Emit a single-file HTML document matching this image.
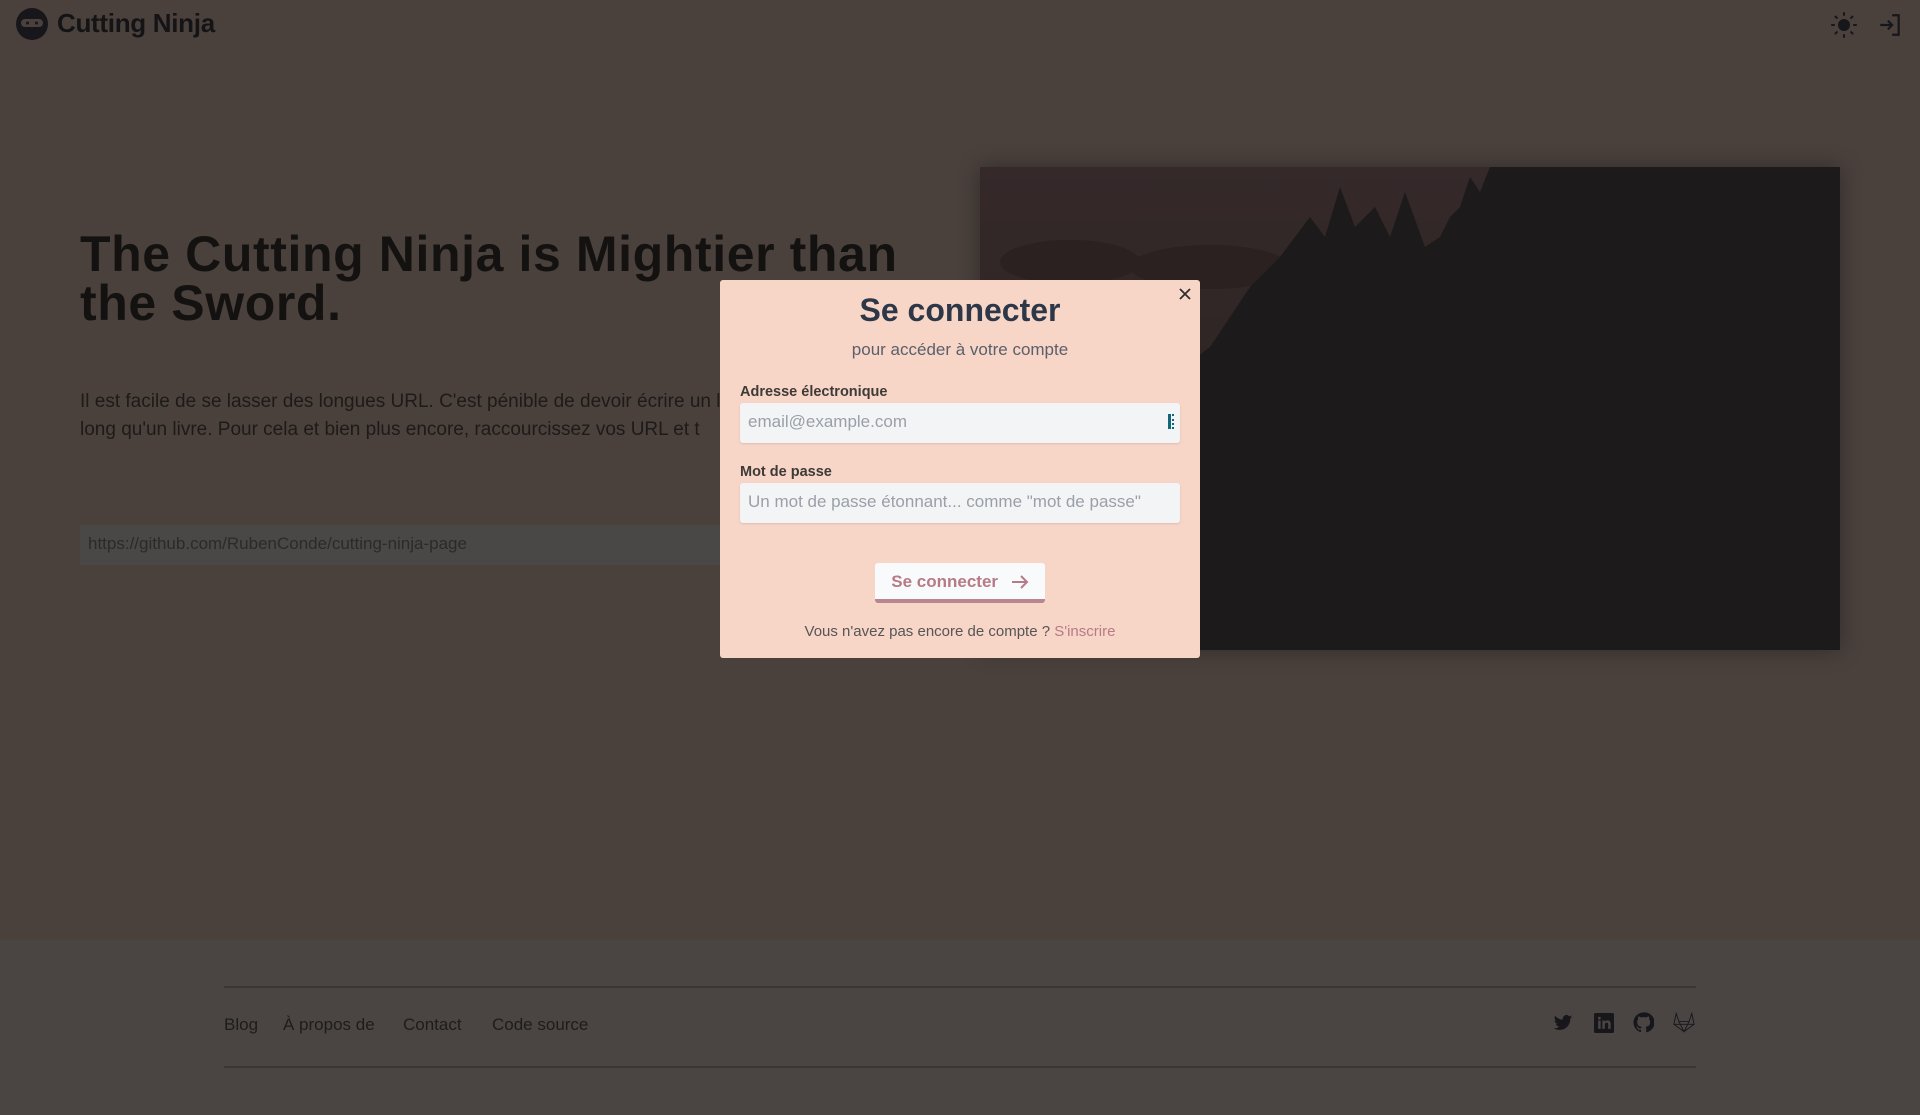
<!DOCTYPE html>
<html><head><meta charset="utf-8"><style>
*{margin:0;padding:0;box-sizing:border-box}
body{width:1920px;height:1115px;background:#4a413d;font-family:"Liberation Sans",sans-serif;position:relative;overflow:hidden}
.abs{position:absolute}
.logo-t{left:57px;top:8px;font-size:26px;font-weight:bold;color:#141316;letter-spacing:-0.3px}
h1{position:absolute;left:80px;top:230px;font-size:50px;line-height:49px;font-weight:bold;color:#141210;letter-spacing:0.6px}
.p{left:80px;top:388px;font-size:19px;line-height:28px;color:#1d1a18;width:800px;white-space:nowrap}
.url{left:80px;top:525px;width:860px;height:40px;background:#4a4847;color:#2b2a29;font-size:17px;padding:9px 8px}
.img{left:980px;top:167px;width:860px;height:483px;background:linear-gradient(180deg,#35292a 0%,#2f2624 40%,#241f1e 100%);box-shadow:0 0 20px rgba(0,0,0,.35);overflow:hidden}
.footer{left:0;top:940px;width:1920px;height:175px;background:#4a4543}
.line{left:224px;width:1472px;height:2px;background:#3a3634}
.fl{top:1015px;font-size:17px;color:#1e1c1b}
.modal{left:720px;top:280px;width:480px;height:378px;background:#f8d6c7;border-radius:3px}
.modal .t{position:absolute;left:0;width:480px;text-align:center}
label{position:absolute;left:20px;font-size:14.5px;font-weight:bold;color:#3d3a38}
.in{position:absolute;left:20px;width:440px;height:40px;background:#f3f4f6;border-radius:3px;box-shadow:0 1px 2px rgba(0,0,0,.12);font-size:17px;color:#9aa0a8;padding:9px 8px;white-space:nowrap;overflow:hidden}
.btn{position:absolute;left:155px;top:283px;width:170px;height:40px;background:#f8fafc;border-radius:3px;border-bottom:4px solid #b88590;color:#b77a86;font-weight:bold;font-size:17px;text-align:center;line-height:37px}
</style></head><body>
<svg class="abs" style="left:15px;top:7px" width="34" height="34" viewBox="0 0 34 34"><circle cx="17" cy="17" r="16" fill="#17161a"/><rect x="6" y="12" width="22" height="8" rx="4" fill="#4a413d"/><circle cx="12.5" cy="16" r="1.5" fill="#17161a"/><circle cx="21.5" cy="16" r="1.5" fill="#17161a"/></svg>
<div class="abs logo-t">Cutting Ninja</div>
<svg class="abs" style="left:1830px;top:11px" width="28" height="28" viewBox="0 0 28 28" fill="#17161a"><circle cx="14" cy="14" r="6"/><g stroke="#17161a" stroke-width="2" stroke-linecap="round"><path d="M14 2v2M14 24v2M2 14h2M24 14h2M5.5 5.5l1.4 1.4M21.1 21.1l1.4 1.4M5.5 22.5l1.4-1.4M21.1 6.9l1.4-1.4"/></g></svg>
<svg class="abs" style="left:1877px;top:12px" width="26" height="26" viewBox="0 0 24 24" fill="none" stroke="#17161a" stroke-width="2"><path d="M3 12h11M10 8l4 4-4 4M14 3h6v18h-6"/></svg>
<h1>The Cutting Ninja is Mightier than<br>the Sword.</h1>
<div class="abs p">Il est facile de se lasser des longues URL. C'est pénible de devoir écrire un lien aussi<br>long qu'un livre. Pour cela et bien plus encore, raccourcissez vos URL et t</div>
<div class="abs url">https://github.com/RubenConde/cutting-ninja-page</div>
<div class="abs img"><svg width="860" height="483" viewBox="0 0 860 483"><ellipse cx="90" cy="95" rx="70" ry="22" fill="#2a2120"/><ellipse cx="230" cy="100" rx="80" ry="22" fill="#2a2120"/><path d="M0 483V380L150 280 190 210 230 180 270 120 300 90 330 50 345 70 360 20 375 60 395 40 410 70 425 25 445 80 460 70 470 50 480 40 490 10 500 25 510 0H860V483Z" fill="#1c1a1a"/></svg></div>
<div class="abs footer"></div>
<div class="abs line" style="top:986px"></div>
<div class="abs line" style="top:1066px"></div>
<div class="abs fl" style="left:224px">Blog</div>
<div class="abs fl" style="left:283px">À propos de</div>
<div class="abs fl" style="left:403px">Contact</div>
<div class="abs fl" style="left:492px">Code source</div>
<svg class="abs" style="left:1553px;top:1013px" width="20" height="20" viewBox="0 0 24 24" fill="#17161a"><path d="M23 4.6a9 9 0 0 1-2.6.7 4.5 4.5 0 0 0 2-2.5 9 9 0 0 1-2.9 1.1A4.5 4.5 0 0 0 11.8 8 12.8 12.8 0 0 1 2.5 3.3a4.5 4.5 0 0 0 1.4 6 4.5 4.5 0 0 1-2-.6 4.5 4.5 0 0 0 3.6 4.5 4.5 4.5 0 0 1-2 .1 4.5 4.5 0 0 0 4.2 3.1A9 9 0 0 1 1 18.3 12.8 12.8 0 0 0 7.9 20.3c8.3 0 12.8-6.9 12.8-12.8v-.6A9 9 0 0 0 23 4.6z"/></svg>
<svg class="abs" style="left:1594px;top:1013px" width="20" height="20" viewBox="0 0 24 24"><rect width="24" height="24" rx="2" fill="#17161a"/><path d="M5 9h3v10H5zM6.5 4.5a1.7 1.7 0 1 1 0 3.4 1.7 1.7 0 0 1 0-3.4zM10 9h3v1.4c.5-.9 1.6-1.6 3.2-1.6 3 0 3.8 2 3.8 4.7V19h-3v-5c0-1.3-.2-2.5-1.7-2.5S13 12.6 13 14v5h-3z" fill="#4a4543"/></svg>
<svg class="abs" style="left:1633px;top:1012px" width="21" height="21" viewBox="0 0 24 24" fill="#17161a"><path d="M12 .5a11.5 11.5 0 0 0-3.6 22.4c.6.1.8-.3.8-.6v-2c-3.2.7-3.9-1.5-3.9-1.5-.5-1.3-1.3-1.7-1.3-1.7-1-.7.1-.7.1-.7 1.2.1 1.8 1.2 1.8 1.2 1 1.8 2.8 1.3 3.5 1 .1-.8.4-1.3.7-1.6-2.6-.3-5.3-1.3-5.3-5.7 0-1.3.5-2.3 1.2-3.1-.1-.3-.5-1.5.1-3.1 0 0 1-.3 3.2 1.2a11 11 0 0 1 5.8 0c2.2-1.5 3.2-1.2 3.2-1.2.6 1.6.2 2.8.1 3.1.8.8 1.2 1.9 1.2 3.1 0 4.4-2.7 5.4-5.3 5.7.4.4.8 1.1.8 2.2v3.3c0 .3.2.7.8.6A11.5 11.5 0 0 0 12 .5z"/></svg>
<svg class="abs" style="left:1673px;top:1012px" width="22" height="21" viewBox="0 0 24 22" fill="none" stroke="#17161a" stroke-width="1"><path d="M12 21 1 13l2.5-12 3 9h11l3-9L23 13zM6.5 10 12 21l5.5-11M1 13h22"/></svg>
<div class="abs modal">
<svg style="position:absolute;right:8px;top:7px" width="14" height="14" viewBox="0 0 14 14" stroke="#2d2d2d" stroke-width="1.8"><path d="M2 2l10 10M12 2 2 12"/></svg>
<div class="t" style="top:12px;font-size:32px;font-weight:bold;color:#2d3748">Se connecter</div>
<div class="t" style="top:60px;font-size:17px;color:#5a5f6b">pour accéder à votre compte</div>
<label style="top:104px">Adresse électronique</label>
<div class="in" style="top:123px">email@example.com<span style="position:absolute;right:6px;top:11px;width:6px;height:15px;border-left:3px solid #116677;border-right:2px dotted #116677"></span></div>
<label style="top:184px">Mot de passe</label>
<div class="in" style="top:203px">Un mot de passe étonnant... comme "mot de passe"</div>
<div class="btn">Se connecter <svg style="vertical-align:-3px;margin-left:8px" width="18" height="16" viewBox="0 0 18 16" fill="none" stroke="#b77a86" stroke-width="2"><path d="M1 8h15M10 2l6 6-6 6"/></svg></div>
<div class="t" style="top:343px;font-size:15px;color:#555">Vous n'avez pas encore de compte ? <span style="color:#b77a86">S'inscrire</span></div>
</div>
</body></html>
